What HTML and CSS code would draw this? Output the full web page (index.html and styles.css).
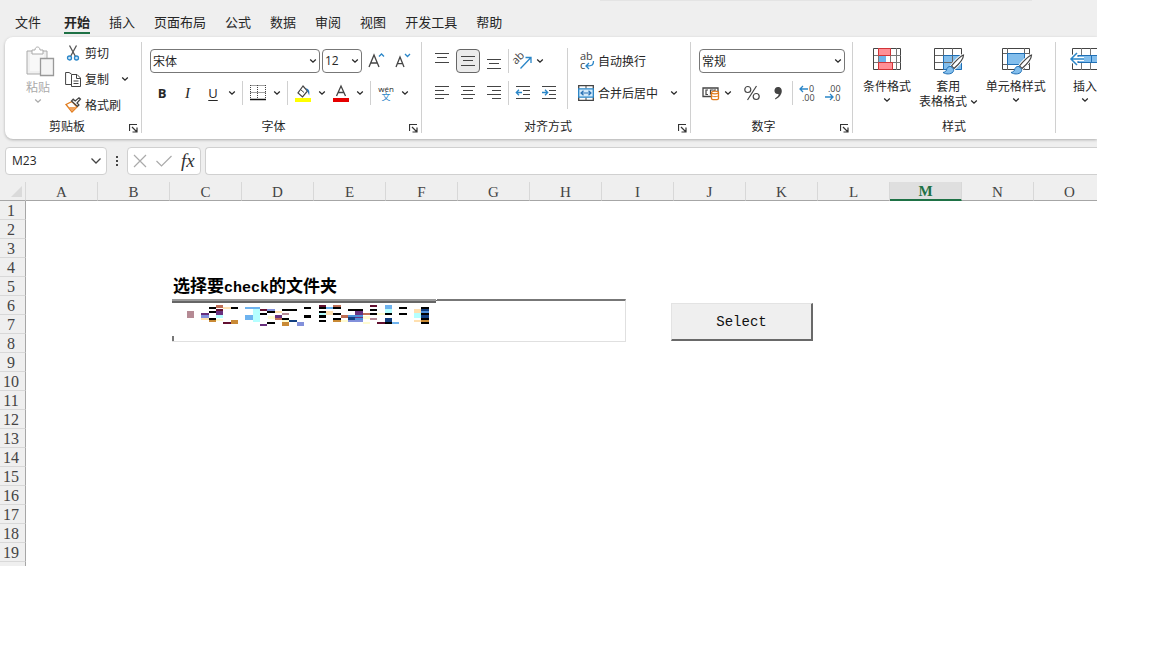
FILE: index.html
```html
<!DOCTYPE html>
<html lang="zh-CN">
<head>
<meta charset="utf-8">
<title>工作簿</title>
<link rel="stylesheet" href="styles.css">
</head>
<body>
<svg class="defs" aria-hidden="true">
  <symbol id="chev" viewBox="0 0 8 8"><path d="M1.2 2.6 4 5.2 6.8 2.6" fill="none" stroke="currentColor" stroke-width="1.3"/></symbol>
  <symbol id="launch" viewBox="0 0 9 9"><path d="M.5 7V.5H8M3 3l4.500 4.500M8 3.500V8H3.500" fill="none" stroke="#333" stroke-width="1.200"/></symbol>
  <symbol id="brush" viewBox="0 0 24 22"><path d="M22.500 1c-3 1-9.500 7.500-12 11l2.500 2.500C17 11 22.500 5 22.500 1z" fill="#fff" stroke="#fff" stroke-width="3"/><path d="M22.500 1c-3 1-9.500 7.500-12 11l2.500 2.500C17 11 22.500 5 22.500 1z" fill="#fff" stroke="#444" stroke-width="1.200"/><path d="M10 12.500c-3-.5-4 1.500-4.500 3.500-.5 1.500-1.500 2-3.500 2.500 3 2 8 2 10-.5 1-1.500 1-3-2-5.500z" fill="#83beec" stroke="#1f6fb5"/></symbol>
</svg>
<div class="app">
  <nav class="tabs">
    <a href="#">文件</a><a href="#" class="active">开始</a><a href="#">插入</a><a href="#">页面布局</a><a href="#">公式</a><a href="#">数据</a><a href="#">审阅</a><a href="#">视图</a><a href="#">开发工具</a><a href="#">帮助</a>
  </nav>
  <div class="ribbon">
    <section class="group clipboard">
      <div class="body">
        <button class="paste"><svg width="28" height="31" viewBox="0 0 28 31"><path d="M1 5h20v23H1z" fill="#f0f0f0" stroke="#aaa"/><path d="M4 8h14v17H4z" fill="#f8f8f8"/><path d="M6 8V4h3c0-4 5-4 5 0h3v4z" fill="#fff" stroke="#aaa"/><path d="M14.500 12.500h13v17h-13z" fill="#f4f4f4" stroke="#999" stroke-width="1.300"/></svg><span>粘贴</span><svg class="chev"><use href="#chev"/></svg></button>
        <div class="stack">
          <button class="line"><svg width="16" height="16"><path d="m4.500.5 6 11M11.500.5l-6 11" fill="none" stroke="#555" stroke-width="1.300"/><circle cx="4.500" cy="13" r="2" fill="#cce6fa" stroke="#2a86c8" stroke-width="1.300"/><circle cx="11.500" cy="13" r="2" fill="#cce6fa" stroke="#2a86c8" stroke-width="1.300"/></svg><span>剪切</span></button>
          <button class="line"><svg width="16" height="16"><path d="M6 13.500H.600V1.500H4L6.500 3" fill="none" stroke="#444"/><path d="M6.500 3.500H12l3.500 3.500v8.500h-9z" fill="#fff" stroke="#444"/><path d="M11.500 3.500V7.500h4M8.500 10h5M8.500 12.500h5" fill="none" stroke="#444"/></svg><span>复制</span><svg class="chev"><use href="#chev"/></svg></button>
          <button class="line"><svg width="16" height="16"><path d="M1 7.500 7 4.500l5 5.500-5 5z" fill="#fff" stroke="#e07b1c" stroke-width="1.300"/><path d="M3.500 10h7l1 .5-4.500 4z" fill="#f2a35c"/><path d="m6.500 4 6 5.500 1.500-1.500-2-2 3.500-4L14 .7 10.200 4 8.200 2.200z" fill="#fff" stroke="#444" stroke-width="1.200"/></svg><span>格式刷</span></button>
        </div>
      </div>
      <footer><h2>剪贴板</h2><button class="launch" aria-label="剪贴板设置"><svg><use href="#launch"/></svg></button></footer>
    </section>

    <section class="group font">
      <div class="body rows">
        <div class="row">
          <label class="combo wide"><select aria-label="字体"><option>宋体</option></select><svg class="chev"><use href="#chev"/></svg></label>
          <label class="combo size"><select aria-label="字号"><option>12</option></select><svg class="chev"><use href="#chev"/></svg></label>
          <button class="ic" aria-label="增大字号"><svg width="18" height="18"><path d="m2 15 5-12 5 12M3.700 11h6.600" fill="none" stroke="#444" stroke-width="1.300"/><path d="m12 4.500 2.500-2.500L17 4.500" fill="none" stroke="#2a86c8" stroke-width="1.300"/></svg></button>
          <button class="ic" aria-label="减小字号"><svg width="18" height="18"><path d="m3 15 4-10 4 10M4.500 11.700h5" fill="none" stroke="#444" stroke-width="1.300"/><path d="M12 2l2.500 2.500L17 2" fill="none" stroke="#2a86c8" stroke-width="1.300"/></svg></button>
        </div>
        <div class="row">
          <button class="ic bold">B</button><button class="ic italic">I</button><button class="ic under">U</button><button class="drop" aria-label="下划线选项"><svg class="chev"><use href="#chev"/></svg></button>
          <i class="sep"></i>
          <button class="ic" aria-label="边框"><svg width="16" height="16"><path d="M.5.5h15M.5 7.500h15M.5 0v14M7.500 0v14M15.500 0v14" fill="none" stroke="#444" stroke-dasharray="1 1"/><path d="M0 14.500h16" stroke="#111" stroke-width="1.500"/></svg></button><button class="drop" aria-label="边框选项"><svg class="chev"><use href="#chev"/></svg></button>
          <i class="sep"></i>
          <button class="ic" aria-label="填充颜色"><svg width="16" height="17"><path d="M8 1 3 8l4.500 4L12.500 6z" fill="#fff" stroke="#444" stroke-width="1.200"/><path d="M5.500 4.500 9 7.500" stroke="#444"/><path d="M11 3.500c2.500 0 4 2 3.200 7l-1.700-4z" fill="#2a72b5"/><path d="M0 13h16v4H0z" fill="#ff0"/></svg></button><button class="drop" aria-label="填充颜色选项"><svg class="chev"><use href="#chev"/></svg></button>
          <button class="ic" aria-label="字体颜色"><svg width="16" height="17"><path d="M3.500 11 8 1l4.500 10M5.200 7.500h5.600" fill="none" stroke="#444" stroke-width="1.300"/><path d="M0 13h16v4H0z" fill="#e60000"/></svg></button><button class="drop" aria-label="字体颜色选项"><svg class="chev"><use href="#chev"/></svg></button>
          <i class="sep"></i>
          <button class="ic pinyin"><span>wén</span><b>文</b></button><button class="drop" aria-label="拼音选项"><svg class="chev"><use href="#chev"/></svg></button>
        </div>
      </div>
      <footer><h2>字体</h2><button class="launch" aria-label="字体设置"><svg><use href="#launch"/></svg></button></footer>
    </section>

    <section class="group align">
      <div class="body split">
        <div class="rows">
          <div class="row even">
            <button class="ic" aria-label="顶端对齐"><svg width="16" height="16"><path d="M1 .5h14M3 4.500h10M1 9.500h14" stroke="#444"/></svg></button>
            <button class="ic pressed" aria-label="垂直居中"><svg width="16" height="16"><path d="M1 3.500h14M3 7.500h10M1 12.500h14" stroke="#444"/></svg></button>
            <button class="ic" aria-label="底端对齐"><svg width="16" height="16"><path d="M1 6.500h14M3 10.500h10M1 15.500h14" stroke="#444"/></svg></button>
            <i class="bar"></i>
            <button class="ic" aria-label="方向"><svg width="18" height="18"><g transform="rotate(-45 7 8)"><text x="0" y="8" class="glyph large">ab</text></g><path d="M6.500 16.500 16.500 6M11.500 5.500h5.500v5.500" fill="none" stroke="#2a86c8" stroke-width="1.300"/></svg></button>
            <button class="drop tight" aria-label="方向选项"><svg class="chev"><use href="#chev"/></svg></button>
          </div>
          <div class="row even">
            <button class="ic" aria-label="左对齐"><svg width="16" height="16"><path d="M1 1.500h14M1 5.500h9M1 9.500h14M1 13.500h9" stroke="#444"/></svg></button>
            <button class="ic" aria-label="居中"><svg width="16" height="16"><path d="M1 1.500h14M3 5.500h10M1 9.500h14M3 13.500h10" stroke="#444"/></svg></button>
            <button class="ic" aria-label="右对齐"><svg width="16" height="16"><path d="M1 1.500h14M6 5.500h9M1 9.500h14M6 13.500h9" stroke="#444"/></svg></button>
            <i class="bar"></i>
            <button class="ic" aria-label="减少缩进"><svg width="16" height="16"><path d="M1 1.500h14M8 5.500h7M8 9.500h7M1 13.500h14" stroke="#444"/><path d="M7 7.500H1.500M4 4.800 1.300 7.500 4 10.200" fill="none" stroke="#2a86c8" stroke-width="1.300"/></svg></button>
            <button class="ic" aria-label="增加缩进"><svg width="16" height="16"><path d="M1 1.500h14M8 5.500h7M8 9.500h7M1 13.500h14" stroke="#444"/><path d="M1 7.500h5.500M4 4.800l2.700 2.700L4 10.200" fill="none" stroke="#2a86c8" stroke-width="1.300"/></svg></button>
          </div>
        </div>
        <i class="tall"></i>
        <div class="rows">
          <button class="line"><svg width="16" height="18"><text x="2" y="8" class="glyph large">ab</text><text x="2" y="17" class="glyph large">c</text><path d="M15.500 9c0 4-1 5-7 5M11 11l-3 3 3 3" fill="none" stroke="#2a86c8" stroke-width="1.300"/></svg><span>自动换行</span></button>
          <button class="line"><svg width="16" height="16"><path d="M.7.7h14.600v14.600H.7z" fill="#fff" stroke="#444" stroke-width="1.300"/><path d="M8 0v3.500M8 12.500V16" stroke="#444"/><path d="M.7 3.800h14.600v8.400H.7z" fill="#d6ebfa" stroke="#2a86c8" stroke-width="1.300"/><path d="M3 8h10M5.500 5.700 3 8l2.500 2.300M10.500 5.700 13 8l-2.500 2.300" fill="none" stroke="#2a72b5" stroke-width="1.200"/></svg><span>合并后居中</span><svg class="chev"><use href="#chev"/></svg></button>
        </div>
      </div>
      <footer><h2>对齐方式</h2><button class="launch" aria-label="对齐设置"><svg><use href="#launch"/></svg></button></footer>
    </section>

    <section class="group number">
      <div class="body rows">
        <label class="combo"><select aria-label="数字格式"><option>常规</option></select><svg class="chev"><use href="#chev"/></svg></label>
        <div class="row even">
          <button class="ic" aria-label="会计格式"><svg width="18" height="16"><path d="M1 3h15v8.500H1z" fill="#fff" stroke="#444" stroke-width="1.300"/><path d="M6 5H4v4.500h2M11 5H8.500v4.500M14 5h-2v2" fill="none" stroke="#444" stroke-width="1.200"/><path d="M9.500 7.500v6c0 1.600 7 1.600 7 0v-6" fill="#fff" stroke="#e07b1c" stroke-width="1.300"/><ellipse cx="13" cy="7.500" rx="3.500" ry="1.300" fill="#fff" stroke="#e07b1c" stroke-width="1.200"/><path d="M9.500 10.500c0 1.500 7 1.500 7 0" fill="none" stroke="#e07b1c"/></svg></button>
          <button class="drop tight" aria-label="会计格式选项"><svg class="chev"><use href="#chev"/></svg></button>
          <button class="ic" aria-label="百分比"><svg width="16" height="16"><circle cx="3.800" cy="4.500" r="3" fill="none" stroke="#444" stroke-width="1.200"/><circle cx="12.200" cy="11.500" r="3" fill="none" stroke="#444" stroke-width="1.200"/><path d="M12.500 1 3.500 15" stroke="#444" stroke-width="1.200"/></svg></button>
          <button class="ic" aria-label="千位分隔"><svg width="16" height="16"><path d="M8 2c5 0 6 8-2.500 12.500l-.5-1C8 11.500 9 10 8.500 9 3 9.500 3.500 2 8 2z" fill="#444"/></svg></button>
          <i class="bar"></i>
          <button class="ic" aria-label="增加小数位数"><svg width="18" height="18"><text x="11" y="8" class="glyph">0</text><text x="4" y="17" class="glyph">.00</text><path d="M10 5H2M5 2 2 5l3 3" fill="none" stroke="#2a86c8" stroke-width="1.300"/></svg></button>
          <button class="ic" aria-label="减少小数位数"><svg width="18" height="18"><text x="4" y="8" class="glyph">.00</text><text x="9" y="17" class="glyph">.0</text><path d="M1 13h8M6 10l3 3-3 3" fill="none" stroke="#2a86c8" stroke-width="1.300"/></svg></button>
        </div>
      </div>
      <footer><h2>数字</h2><button class="launch" aria-label="数字设置"><svg><use href="#launch"/></svg></button></footer>
    </section>

    <section class="group styles">
      <div class="body">
        <button class="big"><svg width="30" height="28"><path d="M1.500 2.500h27v21h-27z" fill="#fff" stroke="#444"/><path d="M2 9.500h27M2 16.500h27M6.500 2v22M12.500 2v22M18.500 2v22M24.500 2v22" stroke="#777"/><path d="M6.500 2.500h12v7h-12zM6.500 16.500h14v7h-14z" fill="#ff8f96" stroke="#d13438"/><path d="M7 10h7v6H7z" fill="#6eb3ea"/></svg><span>条件格式</span><svg class="chev"><use href="#chev"/></svg></button>
        <button class="big"><svg width="30" height="28"><path d="M1.500 2.500h27v21h-27z" fill="#fff" stroke="#444"/><path d="M10 9h19v15H10z" fill="#83beec"/><path d="M2 9.500h27M2 16.500h27M10.500 2v22M19.500 2v22" stroke="#666"/><path d="M10.500 9.500h18v14h-18z" fill="none" stroke="#1f6fb5"/><use href="#brush" x="8" y="8" width="24" height="22"/></svg><span>套用<br>表格格式 <svg class="chev"><use href="#chev"/></svg></span></button>
        <button class="big"><svg width="30" height="28"><path d="M1.500 2.500h27v21h-27z" fill="#fff" stroke="#444"/><path d="M2 7.500h27M2 18.500h27M6.500 2v22M23.500 2v22" stroke="#666"/><path d="M6.500 7.500h17v11h-17z" fill="#83beec" stroke="#1f6fb5"/><use href="#brush" x="8" y="8" width="24" height="22"/></svg><span>单元格样式</span><svg class="chev"><use href="#chev"/></svg></button>
      </div>
      <footer><h2>样式</h2></footer>
    </section>

    <section class="group cells">
      <div class="body">
        <button class="big"><svg width="34" height="28"><path d="M4.500 2.500h29v21h-29z" fill="#fff" stroke="#444"/><path d="M5 9.500h29M5 16.500h29M13.500 2v22M22.500 2v22M31.500 2v22" stroke="#777"/><path d="M10 9.500h24v7H10z" fill="#83beec" stroke="#1f6fb5"/><path d="M23.500 10v7" stroke="#1f6fb5"/><path d="M16 13H3M9 7l-6 6 6 6" fill="none" stroke="#fff" stroke-width="4"/><path d="M16 13H3M9 7l-6 6 6 6" fill="none" stroke="#2a86c8" stroke-width="1.500"/></svg><span>插入</span><svg class="chev"><use href="#chev"/></svg></button>
      </div>
    </section>
  </div>

  <div class="formula">
    <label class="namebox"><input value="M23" aria-label="名称框"><svg width="12" height="8"><path d="m1.500 1.500 4.500 4.500 4.500-4.500" fill="none" stroke="#444" stroke-width="1.300"/></svg></label>
    <svg class="dots" width="4" height="12"><path d="M1 1h2v2H1zM1 5h2v2H1zM1 9h2v2H1z" fill="#444"/></svg>
    <div class="actions">
      <button aria-label="取消"><svg width="14" height="14"><path d="m1 1 12 12M13 1 1 13" stroke="#aaa" stroke-width="1.200"/></svg></button>
      <button aria-label="输入"><svg width="18" height="14"><path d="m1.500 7 5 5 10-10" fill="none" stroke="#aaa" stroke-width="1.200"/></svg></button>
      <button class="fx">fx</button>
    </div>
    <input class="entry" aria-label="编辑栏">
  </div>

  <div class="sheet">
    <table>
      <colgroup><col class="rowhead"><col span="15" class="column"></colgroup>
      <thead><tr><th class="corner"><svg width="11" height="11"><path d="M11 0v11H0z" fill="#dadada"/></svg></th><th>A</th><th>B</th><th>C</th><th>D</th><th>E</th><th>F</th><th>G</th><th>H</th><th>I</th><th>J</th><th>K</th><th>L</th><th class="current">M</th><th>N</th><th>O</th></tr></thead>
      <tbody>
        <tr><th>1</th><td colspan="15"></td></tr>
        <tr><th>2</th><td colspan="15"></td></tr>
        <tr><th>3</th><td colspan="15"></td></tr>
        <tr><th>4</th><td colspan="15"></td></tr>
        <tr><th>5</th><td colspan="2"></td><td colspan="13" class="title">选择要<span>check</span>的文件夹</td></tr>
        <tr><th>6</th><td colspan="15"></td></tr>
        <tr><th>7</th><td colspan="15"></td></tr>
        <tr><th>8</th><td colspan="15"></td></tr>
        <tr><th>9</th><td colspan="15"></td></tr>
        <tr><th>10</th><td colspan="15"></td></tr>
        <tr><th>11</th><td colspan="15"></td></tr>
        <tr><th>12</th><td colspan="15"></td></tr>
        <tr><th>13</th><td colspan="15"></td></tr>
        <tr><th>14</th><td colspan="15"></td></tr>
        <tr><th>15</th><td colspan="15"></td></tr>
        <tr><th>16</th><td colspan="15"></td></tr>
        <tr><th>17</th><td colspan="15"></td></tr>
        <tr><th>18</th><td colspan="15"></td></tr>
        <tr><th>19</th><td colspan="15"></td></tr>
      </tbody>
    </table>
    <div class="tail"></div>
    <input class="path" aria-label="文件夹路径">
    <svg class="mosaic" viewBox="36 87 795 129" shape-rendering="crispEdges" aria-hidden="true">
      <path d="M36 87h795v129H36z" fill="#fff"/>
      <path d="M36 87h792v6H36z" fill="#999"/><path d="M36 93h792v6H36z" fill="#666"/><path d="M828 90h3v3h-3z" fill="#666"/>
      <path d="M36 213h795v3H36z" fill="#e0e0e0"/><path d="M36 198h6v16h-6z" fill="#777"/>
      <g fill="#b58a94"><path d="M81 123h21v20H81zM366 129h21v6h-21zM630 144h21v6h-21z"/></g>
      <g fill="#ffe0b0"><path d="M189 110h24v7h-24zM123 144h24v6h-24zM345 123h21v6h-21zM498 123h21v12h-21zM762 150h21v6h-21zM762 117h21v12h-21z"/></g>
      <g fill="#fffbd0"><path d="M168 147h21v6h-21zM324 138h21v8h-21zM366 147h21v9h-21zM543 150h21v6h-21zM609 138h21v8h-21zM651 129h24v6h-24zM609 155h21v6h-21z"/></g>
      <g fill="#b5ffff"><path d="M279 117h21v39h-21zM168 135h21v9h-21zM675 117h21v12h-21zM762 129h21v15h-21zM477 129h21v6h-21z"/></g>
      <g fill="#6eb3ef"><path d="M255 110h45v7h-45zM255 135h24v15h-24zM498 110h21v7h-21zM675 105h21v12h-21zM696 155h21v7h-21z"/></g>
      <g fill="#69317f"><path d="M123 129h24v6h-24zM168 123h21v12h-21zM300 129h21v6h-21zM345 135h21v9h-21zM300 162h21v6h-21zM585 123h24v21h-24z"/></g>
      <g fill="#8290db"><path d="M123 135h24v9h-24zM321 117h24v6h-24zM411 155h21v12h-21zM564 150h21v6h-21zM585 150h24v6h-24z"/></g>
      <g fill="#bd6e55"><path d="M168 105h21v10h-21zM519 105h24v6h-24zM345 144h21v6h-21zM543 135h21v9h-21zM609 129h21v6h-21z"/></g>
      <g fill="#631030"><path d="M168 117h21v6h-21zM189 156h24v6h-24zM477 105h21v6h-21zM630 105h21v6h-21zM651 156h24v6h-24zM300 117h21v6h-21z"/></g>
      <g fill="#000"><path d="M147 111h21v6h-21zM213 111h21v6h-21zM147 123h21v6h-21zM147 144h21v6h-21zM300 129h21v6h-21zM321 123h24v6h-24zM366 117h45v6h-45zM321 156h24v6h-24zM366 144h21v6h-21zM432 111h21v6h-21zM432 135h21v9h-21zM477 111h21v6h-21zM477 123h21v6h-21zM477 135h21v9h-21zM477 150h21v6h-21zM519 111h24v6h-24zM519 129h24v6h-24zM519 144h24v6h-24zM564 117h45v6h-45zM630 117h21v6h-21zM630 129h21v6h-21zM675 129h21v6h-21zM675 156h21v6h-21zM717 111h24v6h-24zM717 129h24v6h-24zM783 111h24v6h-24zM783 129h24v6h-24zM783 144h24v6h-24zM783 156h24v6h-24z"/></g>
      <g fill="#123f80"><path d="M387 150h24v6h-24zM564 138h21v12h-21zM675 144h21v12h-21zM783 117h24v6h-24zM783 135h24v9h-24z"/></g>
      <g fill="#4d8fd9"><path d="M564 135h45v6h-45zM585 144h24v6h-24zM783 123h24v6h-24z"/></g>
      <g fill="#c98a35"><path d="M213 150h21v12h-21zM147 150h21v6h-21zM366 156h21v12h-21zM519 150h24v6h-24zM783 150h24v6h-24z"/></g>
    </svg>
    <button class="select">Select</button>
  </div>
</div>
</body>
</html>
```
FILE: styles.css
```css
* { box-sizing: border-box; }

body {
  margin: 0;
  background: #fff;
  color: #262626;
  font: 12px/16px "Noto Sans CJK SC", sans-serif;
}

button, input, select {
  margin: 0;
  padding: 0;
  border: 0;
  background: none;
  color: inherit;
  font: inherit;
}

svg { flex: none; display: block; overflow: visible; }
.defs { position: absolute; width: 0; height: 0; }
.chev { width: 8px; height: 8px; }
.glyph { font: 9px "Open Sans", sans-serif; fill: #444; }
.large { font-size: 11px; }

.app {
  position: relative;
  margin-right: 55px;
  overflow: hidden;
  background: #efefef;
}

.app::before {
  content: "";
  position: absolute;
  top: 0;
  left: 600px;
  width: 432px;
  height: 1px;
  background: #e4e4e4;
}

/* Tabs */
.tabs {
  display: flex;
  gap: 19px;
  height: 37px;
  padding: 12px 15px 0;
  font-size: 13px;
  line-height: 20px;
}
.tabs a { color: inherit; text-decoration: none; white-space: nowrap; height: 22px; }
.tabs .active { font-weight: bold; border-bottom: 2px solid #1e7145; margin: 0 0 0 4px; }

/* Ribbon */
.ribbon {
  display: flex;
  margin-left: 5px;
  padding: 5px 0 6px;
  background: #fff;
  border-radius: 8px 0 0 8px;
  box-shadow: 0 1px 3px #0004;
}
.group {
  display: flex;
  flex-direction: column;
  flex: none;
  height: 91px;
  border-right: 1px solid #d0d0d0;
}
.group:last-child { border: 0; }
.body { display: flex; flex: 1; }
.group footer { display: flex; height: 15px; }
h2 { flex: 1; margin: 0; font: inherit; line-height: 16px; text-align: center; }
.launch { width: 16px; padding: 5px 0 0 4px; }
.launch svg { width: 9px; height: 9px; }

.rows { display: flex; flex-direction: column; gap: 8px; }
.body.rows, .align .rows { padding-top: 7px; }
.row { display: flex; align-items: center; height: 24px; }
.even { gap: 2px; }
.ic {
  display: flex;
  align-items: center;
  justify-content: center;
  width: 24px;
  height: 24px;
}
.drop { display: flex; align-items: center; justify-content: center; width: 14px; height: 24px; }
.tight { margin: 0 3px 0 -4px; }
.pressed { border: 1px solid #666; border-radius: 4px; background: #ebebeb; }
.sep { width: 1px; height: 24px; margin: 0 3px; background: #d0d0d0; }
.bar { width: 1px; height: 24px; background: #d0d0d0; }
.tall { width: 1px; height: 61px; margin: 6px 6px 0; background: #d0d0d0; }

.line { display: flex; align-items: center; gap: 4px; height: 24px; white-space: nowrap; }
.line .chev { margin-left: 8px; }

.clipboard { width: 137px; }
.clipboard h2 { padding-left: 4px; }
.paste {
  display: flex;
  flex-direction: column;
  align-items: center;
  width: 32px;
  margin: 4px 11px 0 17px;
  color: #aaa;
}
.paste span { padding: 2px 0; }
.paste svg:first-child { margin-left: 4px; }
.stack { display: flex; flex-direction: column; gap: 2px; margin-top: -1px; }

.font { width: 280px; }
.font .body { padding-left: 8px; }
.font .row:first-child { gap: 2px; }
.combo {
  display: flex;
  align-items: center;
  height: 24px;
  padding: 0 2px;
  border: 1px solid #777;
  border-radius: 4px;
  background: #fff;
}
.combo select { flex: 1; min-width: 0; appearance: none; height: 20px; line-height: 18px; }
.wide { width: 170px; }
.size { width: 40px; }
.size select { font-family: "Open Sans", sans-serif; }
.bold { font-family: "Open Sans", sans-serif; font-weight: bold; font-size: 13px; }
.italic { font-family: "Liberation Serif", serif; font-style: italic; font-size: 15px; width: 27px; }
.under { font-family: "Open Sans", sans-serif; text-decoration: underline; text-underline-offset: 2px; font-size: 13px; }
.pinyin { flex-direction: column; font: 8px/8px "Open Sans", "Noto Sans CJK SC", sans-serif; }
.pinyin b { font-size: 9px; font-weight: normal; color: #2a86c8; }

.align { width: 269px; }
.align .split { padding-left: 8px; }
.align .split > .rows:last-child { padding-left: 4px; }

.number { width: 162px; }
.number .body { padding-left: 8px; padding-right: 7px; }

.styles { width: 203px; }
.styles .body { gap: 8px; padding-left: 10px; }
.big {
  display: flex;
  flex-direction: column;
  align-items: center;
  padding-top: 4px;
  line-height: 15px;
  white-space: nowrap;
}
.big span { padding-top: 4px; }
.big > .chev { margin-top: 3px; }
.big span .chev { display: inline-block; }
.cells .body { padding-left: 12px; }

/* Formula bar */
.formula { display: flex; align-items: center; margin: 8px 0 7px 5px; height: 28px; }
.namebox, .actions, .entry { height: 28px; border: 1px solid #d0d0d0; border-radius: 4px; background: #fff; }
.namebox { display: flex; align-items: center; width: 102px; padding: 0 4px 0 6px; }
.namebox input { flex: 1; min-width: 0; font-family: "Open Sans", sans-serif; }
.dots { margin: 0 8px; }
.actions { display: flex; align-items: center; gap: 8px; width: 74px; padding: 0 5px; }
.fx { font: italic 19px/20px "Liberation Serif", serif; color: #333; }
.entry { flex: 1; min-width: 0; margin-left: 4px; border-right: 0; border-radius: 4px 0 0 4px; }

/* Worksheet */
.sheet { position: relative; background: #fff; }
table { table-layout: fixed; width: 1106px; border-collapse: separate; border-spacing: 0; }
.rowhead { width: 26px; }
.column { width: 72px; }
th, td { padding: 0; height: 19px; }
th { background: #efefef; color: #444; font: 16px/16px "Liberation Serif", serif; }
thead th {
  border-right: 1px solid #d8d8d8;
  border-bottom: 1px solid #a6a6a6;
  font-size: 15px;
  vertical-align: bottom;
}
tbody th {
  padding: 2px 3px 0 0;
  border-right: 1px solid #a6a6a6;
  border-bottom: 1px solid #d8d8d8;
}
.corner svg { margin: 0 0 3px 11px; }
thead .current { background: #dfdfdf; color: #1e7145; font-weight: bold; border-bottom: 2px solid #1e7145; line-height: 15px; }
.title {
  padding-left: 3px;
  color: #000;
  font-size: 17px;
  line-height: 14px;
  font-weight: bold;
  white-space: nowrap;
}
.title span { font: bold 15px/14px "Liberation Mono", monospace; }
.tail { width: 26px; height: 4px; background: #efefef; border-right: 1px solid #a6a6a6; }

/* Controls floating over the cells */
.path {
  position: absolute;
  left: 172px;
  top: 117px;
  width: 454px;
  height: 43px;
  border: 1px solid #e0e0e0;
  border-top: 2px solid #777;
}
.mosaic { position: absolute; left: 172px; top: 117px; width: 265px; height: 43px; }
.select {
  position: absolute;
  left: 671px;
  top: 121px;
  width: 142px;
  height: 38px;
  border: 1px solid #e3e3e3;
  border-right: 2px solid #696969;
  border-bottom: 2px solid #696969;
  background: #efefef;
  color: #111;
  font: 14px/18px "Liberation Mono", monospace;
}
```
